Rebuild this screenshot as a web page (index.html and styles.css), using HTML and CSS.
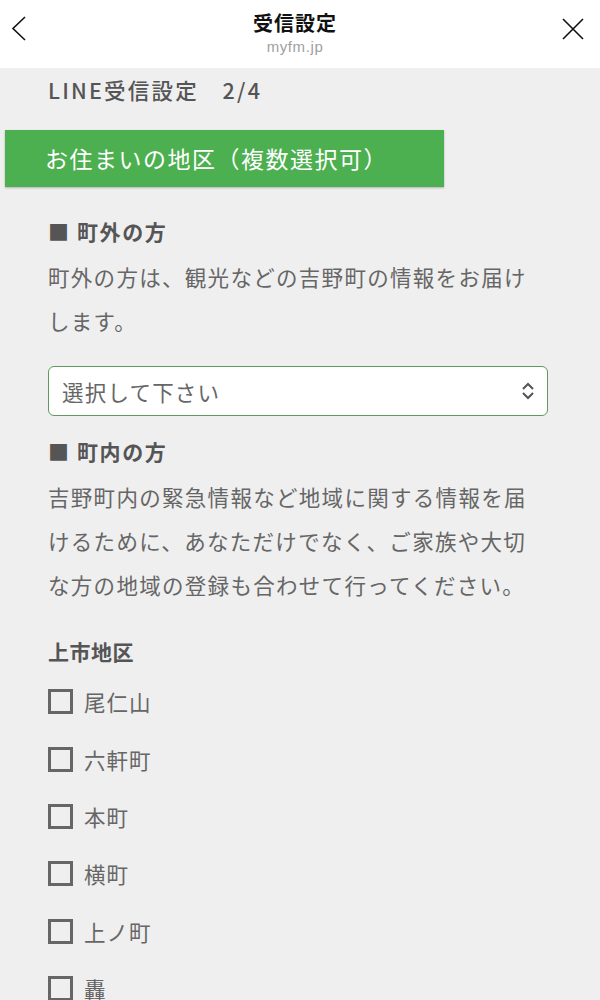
FILE: index.html
```html
<!DOCTYPE html>
<html lang="ja">
<head>
<meta charset="utf-8">
<title>受信設定</title>
<link rel="stylesheet" href="styles.css">
</head>
<body>
<header class="topbar">
  <button class="nav-btn back" aria-label="戻る">
    <svg width="20" height="30" viewBox="0 0 20 30"><path d="M15 3 L3 14.5 L15 26" fill="none" stroke="#111" stroke-width="1.6"/></svg>
  </button>
  <div class="titles">
    <div class="title">受信設定</div>
    <div class="host">myfm.jp</div>
  </div>
  <button class="nav-btn close" aria-label="閉じる">
    <svg width="26" height="26" viewBox="0 0 26 26"><path d="M3 3 L23 23 M23 3 L3 23" fill="none" stroke="#111" stroke-width="1.6"/></svg>
  </button>
</header>

<main class="content">
  <div class="step">LINE受信設定　2/4</div>
  <div class="banner">お住まいの地区（複数選択可）</div>

  <div class="section">
    <h2 class="heading heading-first">■ 町外の方</h2>
    <p class="desc">町外の方は、観光などの吉野町の情報をお届けします。</p>
    <div class="select">
      <span>選択して下さい</span>
      <svg class="updown" width="14" height="18" viewBox="0 0 14 18"><path d="M2 7 L7 2 L12 7 M2 11 L7 16 L12 11" fill="none" stroke="#555" stroke-width="2"/></svg>
    </div>
  </div>

  <div class="section">
    <h2 class="heading heading-second">■ 町内の方</h2>
    <p class="desc">吉野町内の緊急情報など地域に関する情報を届けるために、あなただけでなく、ご家族や大切な方の地域の登録も合わせて行ってください。</p>
  </div>

  <div class="area">
    <h3 class="area-title">上市地区</h3>
    <ul class="checks">
      <li class="check"><span class="box"></span><span class="label">尾仁山</span></li>
      <li class="check"><span class="box"></span><span class="label">六軒町</span></li>
      <li class="check"><span class="box"></span><span class="label">本町</span></li>
      <li class="check"><span class="box"></span><span class="label">横町</span></li>
      <li class="check"><span class="box"></span><span class="label">上ノ町</span></li>
      <li class="check"><span class="box"></span><span class="label">轟</span></li>
    </ul>
  </div>
</main>
</body>
</html>
```

FILE: styles.css
```css
* { box-sizing: border-box; }
html, body { margin: 0; padding: 0; }
body {
  background: #efefef;
  font-family: "Noto Sans CJK JP", "Noto Sans", sans-serif;
  color: #666;
  width: 600px;
  overflow: hidden;
}

.topbar {
  height: 68px;
  background: #fff;
  display: flex;
  align-items: center;
  justify-content: space-between;
  padding: 0 12px 0 8px;
}
.nav-btn {
  background: none;
  border: 0;
  padding: 0;
  display: flex;
  align-items: center;
  justify-content: center;
}
.back { width: 24px; height: 46px; margin-top: -10px; }
.close { width: 30px; height: 46px; margin-top: -10px; }
.titles {
  display: flex;
  flex-direction: column;
  align-items: center;
}
.title {
  font-size: 20px;
  font-weight: 700;
  color: #111;
  letter-spacing: 1px;
  line-height: 26px;
  margin-top: 0;
}
.host {
  font-family: "Liberation Sans", Arial, sans-serif;
  font-size: 15px;
  color: #a0a0a0;
  letter-spacing: 0.6px;
  line-height: 22px;
}

.content {
  padding: 0 0 0 48px;
}
.step {
  font-size: 21.5px;
  font-weight: 500;
  color: #555;
  line-height: 44px;
  letter-spacing: 2.2px;
}
.banner {
  margin: 18px 0 0 -43px;
  width: 439px;
  height: 57px;
  line-height: 57px;
  background: #4caf50;
  color: #fff;
  font-size: 23px;
  letter-spacing: 1.5px;
  padding-left: 40px;
  box-shadow: 0 1px 2px rgba(0, 0, 0, 0.25);
}

.heading {
  margin: 0;
  font-size: 21px;
  font-weight: 700;
  color: #555;
  line-height: 44px;
  letter-spacing: 1.6px;
}
.heading-first { margin-top: 22px; }
.heading-second { margin-top: 13px; }

.desc {
  margin: 2px 0 0;
  width: 500px;
  font-size: 21.5px;
  line-height: 44px;
  letter-spacing: 1.3px;
  color: #666;
}

.select {
  margin-top: 23px;
  width: 500px;
  height: 50px;
  background: #fff;
  border: 1.5px solid #5f9a5f;
  border-radius: 6px;
  display: flex;
  align-items: center;
  justify-content: space-between;
  padding: 0 12px 0 13px;
  font-size: 21.5px;
  letter-spacing: 1.2px;
  color: #666;
}
.updown { display: block; }

.area-title {
  margin: 22px 0 0;
  font-size: 21px;
  font-weight: 700;
  color: #555;
  line-height: 44px;
  letter-spacing: 0.5px;
}
.checks {
  list-style: none;
  margin: 0;
  padding: 0;
}
.check {
  height: 57.4px;
  display: flex;
  align-items: center;
  gap: 11px;
}
.box {
  width: 25px;
  height: 25px;
  border: 3px solid #666;
  flex: none;
}
.label {
  font-size: 21.5px;
  letter-spacing: 1px;
  color: #666;
}
```
